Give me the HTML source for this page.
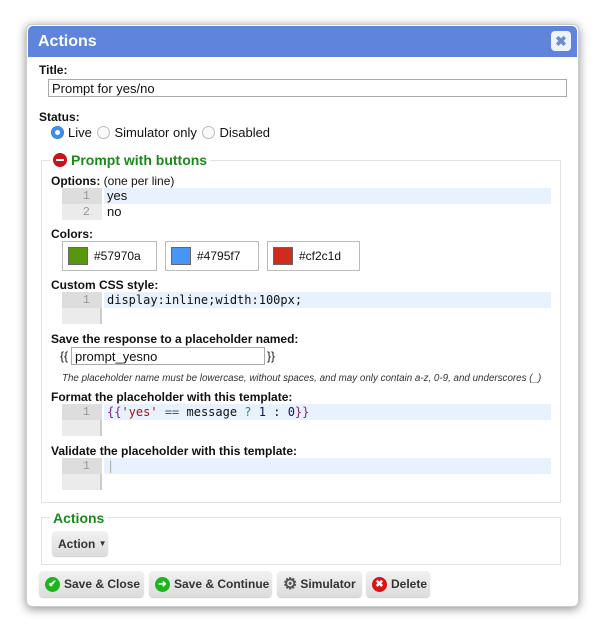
<!DOCTYPE html>
<html><head><meta charset="utf-8"><style>
*{box-sizing:border-box;margin:0;padding:0}
body{width:604px;height:628px;background:#fff;font-family:"Liberation Sans",Arial,sans-serif;font-size:12px;color:#111;position:relative;overflow:hidden}
.a{position:absolute}
.dlg{left:26px;top:24px;width:553px;height:583px;border:1px solid #ccc;border-radius:6px;background:#fff;box-shadow:0 2px 10px rgba(0,0,0,.45)}
.hdr{left:28px;top:26px;width:549px;height:31px;background:#5e84dc;border-radius:5px 5px 0 0;color:#fff;font-weight:bold;font-size:16px;padding:7px 0 0 10px}
.x{left:551px;top:31px;width:20px;height:20px;background:#eef2fb;border-radius:4px;color:#6b8dcf;font-weight:bold;text-align:center;font-size:14px;line-height:20px}
b{font-weight:bold}
.lbl{font-weight:bold;font-size:12px}
.inp{border:1px solid #aaa;background:#fff;font-size:13px;padding:1px 3px;height:18px;line-height:15px}
.radio{display:inline-block;width:13px;height:13px;border-radius:50%;border:1px solid #bbb;vertical-align:-2px;margin:0 4px 0 2px;background:#fafafa}
.radio.on{background:#3b8ff0;border-color:#2f7fe0;box-shadow:inset 0 0 0 3px #3b8ff0,inset 0 0 0 6px #fff}
.fs{border:1px solid #e2e2e2}
.leg{background:#fff;color:#1a8a1a;font-weight:bold;font-size:14px;padding:0 3px;display:flex;align-items:center}
.cm{left:62px;width:489px}
.gut{position:absolute;left:0;top:0;bottom:0;width:40px;background:#ebebeb;border-right:2px solid #ccc}
.ln{position:absolute;left:0;width:40px;height:16px;background:#ddd;color:#999;text-align:right;padding-right:12px;font-family:"Liberation Mono",monospace;font-size:12px;line-height:16px}
.hl{position:absolute;left:42px;right:0;height:16px;background:#e8f2fe}
.code{position:absolute;left:45px;font-family:"DejaVu Sans Mono",monospace;font-size:12px;line-height:16px}
.sw{top:241px;height:30px;border:1px solid #bbb;font-size:12px;padding:5px 0 0 5px}
.sw i{display:inline-block;width:20px;height:18px;border:1px solid #666;vertical-align:-5px;margin-right:6px}
.btn{height:26px;border-radius:4px;background:linear-gradient(#f1f1f1,#dcdcdc);box-shadow:0 1px 1px rgba(0,0,0,.2);font-weight:bold;font-size:12px;color:#333;padding-left:6px;white-space:nowrap;display:flex;align-items:center}
.ic{display:inline-block;width:15px;height:15px;border-radius:50%;margin-right:4px;color:#fff;text-align:center;font-size:10px;line-height:15px;flex:none}
</style></head><body>
<div class="a dlg"></div>
<div class="a hdr">Actions</div>
<div class="a x">✖</div>

<div class="a lbl" style="left:39px;top:63px">Title:</div>
<div class="a inp" style="left:48px;top:79px;width:519px">Prompt for yes/no</div>
<div class="a lbl" style="left:39px;top:110px">Status:</div>
<div class="a" style="left:49px;top:125px;font-size:13px"><span class="radio on"></span>Live <span class="radio"></span>Simulator only <span class="radio"></span>Disabled</div>

<div class="a fs" style="left:41px;top:160px;width:520px;height:343px"></div>
<div class="a leg" style="left:50px;top:152px"><span class="ic" style="background:#c8141a;width:14px;height:14px;position:relative"><span style="position:absolute;left:3px;top:6px;width:8px;height:2px;background:#fff"></span></span>Prompt with buttons</div>

<div class="a" style="left:51px;top:174px"><b>Options:</b> (one per line)</div>
<div class="a cm" style="top:188px;height:32px"><div class="gut"></div><div class="ln" style="top:0">1</div><div class="ln" style="top:16px;background:#ebebeb">2</div><div class="hl" style="top:0"></div><div class="code" style="top:0;font-family:'Liberation Sans',sans-serif;font-size:13px">yes<br>no</div></div>

<div class="a lbl" style="left:51px;top:227px">Colors:</div>
<div class="a sw" style="left:62px;width:95px"><i style="background:#57970a"></i>#57970a</div>
<div class="a sw" style="left:165px;width:94px"><i style="background:#4795f7"></i>#4795f7</div>
<div class="a sw" style="left:267px;width:93px"><i style="background:#cf2c1d"></i>#cf2c1d</div>

<div class="a lbl" style="left:51px;top:278px">Custom CSS style:</div>
<div class="a cm" style="top:292px;height:32px"><div class="gut"></div><div class="ln" style="top:0">1</div><div class="hl" style="top:0"></div><div class="code" style="top:0">display:inline;width:100px;</div></div>

<div class="a lbl" style="left:51px;top:332px">Save the response to a placeholder named:</div>
<div class="a" style="left:60px;top:349px">{{</div>
<div class="a inp" style="left:71px;top:347px;width:194px">prompt_yesno</div>
<div class="a" style="left:267px;top:349px">}}</div>
<div class="a" style="left:62px;top:373px;font-size:9.8px;font-style:italic;color:#333;white-space:nowrap">The placeholder name must be lowercase, without spaces, and may only contain a-z, 0-9, and underscores (_)</div>

<div class="a lbl" style="left:51px;top:390px">Format the placeholder with this template:</div>
<div class="a cm" style="top:404px;height:32px"><div class="gut"></div><div class="ln" style="top:0">1</div><div class="hl" style="top:0"></div><div class="code" style="top:0"><span style="color:#8a1c8a">{{</span><span style="color:#a11">'yes'</span> <span style="color:#555">==</span> message <span style="color:#287">?</span> <span style="color:#116">1</span> : <span style="color:#116">0</span><span style="color:#8a1c8a">}}</span></div></div>

<div class="a lbl" style="left:51px;top:444px">Validate the placeholder with this template:</div>
<div class="a cm" style="top:458px;height:32px"><div class="gut"></div><div class="ln" style="top:0">1</div><div class="hl" style="top:0"></div><div class="code" style="top:0;color:#aaa">|</div></div>

<div class="a fs" style="left:41px;top:517px;width:520px;height:48px"></div>
<div class="a leg" style="left:50px;top:510px">Actions</div>
<div class="a btn" style="left:52px;top:531px;width:56px;height:25px">Action&nbsp;<span style="font-size:8px">▼</span></div>

<div class="a btn" style="left:39px;top:571px;width:105px"><span class="ic" style="background:#1cb51c">✔</span>Save &amp; Close</div>
<div class="a btn" style="left:149px;top:571px;width:123px"><span class="ic" style="background:#1cb51c">➜</span>Save &amp; Continue</div>
<div class="a btn" style="left:277px;top:571px;width:85px"><span style="font-size:16px;color:#555;margin-right:3px">⚙</span>Simulator</div>
<div class="a btn" style="left:366px;top:571px;width:64px"><span class="ic" style="background:#d11">✖</span>Delete</div>
</body></html>
